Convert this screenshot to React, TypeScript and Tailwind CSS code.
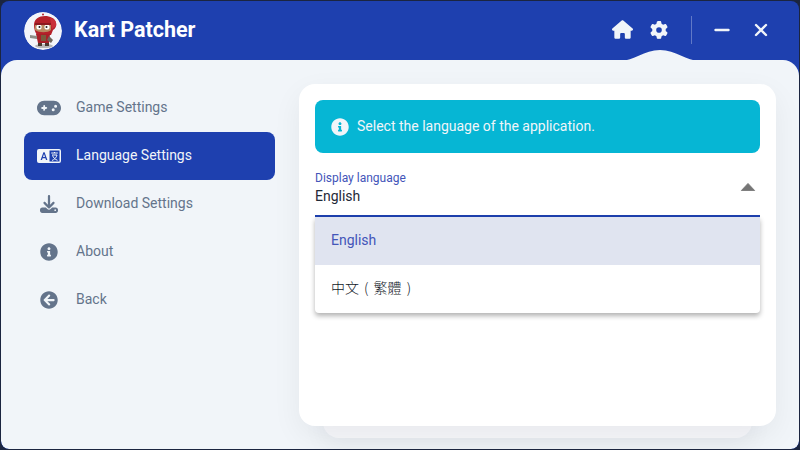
import { FaArrowCircleLeft, FaInfoCircle } from "react-icons/fa";
import { FaDownload, FaGamepad, FaGear, FaHouse } from "react-icons/fa6";
import type { ReactNode } from "react";

function KartLogo() {
  return (
    <svg viewBox="0 0 38 38" className="w-[38px] h-[38px] rounded-full">
      <circle cx="19" cy="19" r="19" fill="#f3f5fa" />
      <ellipse cx="20" cy="34" rx="9" ry="2" fill="#b8b8b8" />
      <path d="M10 13c0-6 5-9 11-9 5 0 10 2 11 7 1 3-1 6-3 7l-2 5H13c-2-3-3-6-3-10z" fill="#b5202a" />
      <path d="M26 6c4 0 7 3 6 8l-4 3z" fill="#c9303a" />
      <path d="M11 13h16v5c-3 3-12 3-16 0z" fill="#b98a62" />
      <circle cx="15" cy="15" r="2.6" fill="#fff" />
      <circle cx="23" cy="15" r="2.6" fill="#fff" />
      <circle cx="15.5" cy="15" r="1" fill="#222" />
      <circle cx="22.5" cy="15" r="1" fill="#222" />
      <path d="M11 11h16v2H11z" fill="#8c1820" />
      <path d="M12 22h14l-1 9H14z" fill="#a81f28" />
      <path d="M17 23h5v6h-5z" fill="#7a5a3c" />
      <path d="M13 24l-7-1v3l7 1z" fill="#8d8d86" />
      <path d="M25 24l4 4-2 3-4-3z" fill="#6f665c" />
      <path d="M14 31h4v3h-4zM21 31h4v3h-4z" fill="#4a3a30" />
      <circle cx="19" cy="2.5" r="1" fill="#b5202a" />
    </svg>
  );
}

// white card with an A and a boxed glyph
function LanguageIcon() {
  return (
    <svg viewBox="0 0 24 14" className="w-6 h-[14px]">
      <rect width="24" height="14" rx="2" fill="#f1f5f9" />
      <path d="M3.6 11L6.4 3.2h1.2L10.4 11H9l-.6-1.8H5.6L5 11zM6 8h2l-1-3z" fill="#1e40af" />
      <rect x="12.5" y="1.5" width="10" height="11" fill="#1e40af" />
      <path d="M14.2 4h6.6M17.5 3v1M15 6h5c-.5 2.5-2.5 4.5-5 5.5M15.5 6.5c.8 2 2.5 4 5 4.8" stroke="#f1f5f9" strokeWidth="1" fill="none" />
    </svg>
  );
}

function NavItem({ icon, label, active }: { icon: ReactNode; label: string; active?: boolean }) {
  return (
    <div
      className={
        active
          ? "flex items-center h-12 rounded-lg bg-[#1e40af] text-[#f1f5f9]"
          : "flex items-center h-12 rounded-lg text-[#64748b]"
      }
    >
      <div className="w-[49px] mr-[3px] flex items-center justify-center text-[24px] shrink-0">{icon}</div>
      <span className="text-sm mb-[2px]">{label}</span>
    </div>
  );
}

export default function App() {
  return (
    <div className="w-[800px] h-[450px] bg-[#1b2540] p-px overflow-hidden font-['Roboto',sans-serif]">
      <div className="relative w-full h-full flex flex-col bg-[#1e40af] rounded-lg overflow-hidden">
        <header className="h-[59px] shrink-0 flex items-center pl-[23px] pr-[30px]">
          <KartLogo />
          <h1 className="ml-[12px] text-[21.5px] font-bold text-white">Kart Patcher</h1>
          <div className="ml-auto mb-[2px] flex items-center text-[#f1f5f9]">
            <FaHouse className="text-[21px]" />
            <FaGear className="text-[18px] ml-[17px]" />
            <div className="w-px h-7 bg-white/30 ml-[23px] mr-[22px]" />
            <svg viewBox="0 0 16 16" className="w-4 h-4">
              <path d="M1.5 8h13" stroke="currentColor" strokeWidth="2.4" strokeLinecap="round" />
            </svg>
            <svg viewBox="0 0 16 16" className="w-4 h-4 ml-[23px]">
              <path d="M3 3l10 10M13 3L3 13" stroke="currentColor" strokeWidth="2.4" strokeLinecap="round" />
            </svg>
          </div>
        </header>

        <svg viewBox="0 0 80 12" className="absolute left-[619px] top-[49px] w-[80px] h-[12px]">
          <path d="M0 11C14 11 24 0 40 0s26 11 40 11v1H0z" fill="#f1f5f9" />
        </svg>

        <main className="flex-1 flex bg-[#f1f5f9] rounded-t-2xl rounded-b-lg min-h-0">
          <nav className="w-[298px] shrink-0 pl-[23px] pr-[24px] pt-[24px]">
            <NavItem icon={<FaGamepad />} label="Game Settings" />
            <NavItem icon={<LanguageIcon />} label="Language Settings" active />
            <NavItem icon={<FaDownload className="text-[18px]" />} label="Download Settings" />
            <NavItem icon={<FaInfoCircle className="text-[18px]" />} label="About" />
            <NavItem icon={<FaArrowCircleLeft className="text-[18px]" />} label="Back" />
          </nav>

          <section className="relative flex-1 mt-[24px] mr-[23px] mb-[23px]">
            <div className="absolute left-6 right-6 -bottom-3 h-10 bg-[#f6f7fa] rounded-2xl shadow-[0_8px_24px_rgba(15,23,42,0.05)]" />
            <div className="relative h-full bg-white rounded-2xl p-4 shadow-[0_10px_30px_rgba(15,23,42,0.06)]">
              <div className="h-[53px] flex items-center gap-2 px-4 rounded-lg bg-[#06b6d4] text-[#f1f5f9] text-sm">
                <FaInfoCircle className="text-[18px] shrink-0" />
                <span className="mb-[2px]">Select the language of the application.</span>
              </div>

              <div className="relative mt-[18px] h-[46px] border-b-2 border-[#1e40af]">
                <div className="text-xs leading-[14px] text-[#4355b9]">Display language</div>
                <div className="mt-[1px] text-sm leading-[20px] text-[#1f2937]">English</div>
                <svg viewBox="0 0 16 9" className="absolute right-[4px] top-[12px] w-[16px] h-[8px]">
                  <path d="M8 0.5L15.5 8.5H0.5z" fill="#757575" stroke="#757575" strokeLinejoin="round" />
                </svg>
              </div>

              <ul className="relative bg-white rounded-b shadow-[0_3px_5px_rgba(0,0,0,0.3)]">
                <li className="h-12 flex items-center px-4 text-sm bg-[#e0e4f0] text-[#4355b9]">
                  <span className="mb-[2px]">English</span>
                </li>
                <li className="h-12 flex items-center px-4 text-sm font-light text-[#111827] [word-spacing:2px] font-['Noto_Sans_CJK_TC',sans-serif]">
                  <span className="mb-[4px]">中文 ( 繁體 )</span>
                </li>
              </ul>
            </div>
          </section>
        </main>
      </div>
    </div>
  );
}
